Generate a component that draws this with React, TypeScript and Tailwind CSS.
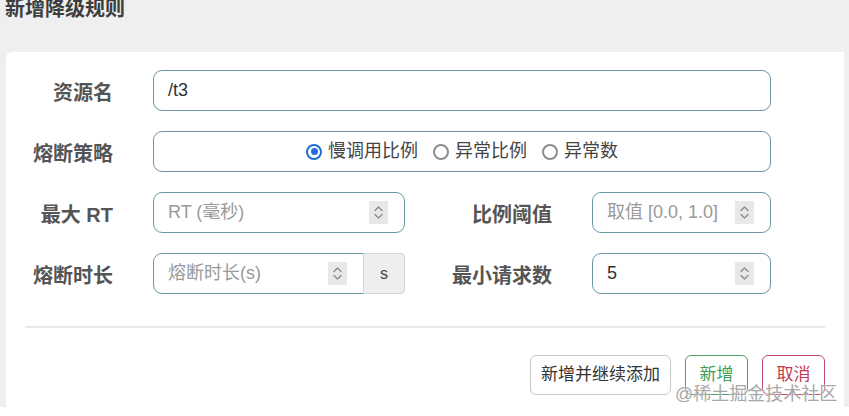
import React from "react"

const font = { fontFamily: '"Liberation Sans", "Noto Sans CJK SC", sans-serif' }

function Spinner() {
  return (
    <span className="flex h-[23px] w-[19px] items-center justify-center bg-[#e8e8e8]">
      <svg width="11" height="17" viewBox="0 0 11 17" fill="none" stroke="#8a8a8a" strokeWidth="1.3" strokeLinecap="round" strokeLinejoin="round">
        <path d="M2 6.5 L5.5 3 L9 6.5" />
        <path d="M2 10.5 L5.5 14 L9 10.5" />
      </svg>
    </span>
  )
}

function Label({ children, w }: { children: React.ReactNode; w: string }) {
  return (
    <div className={`${w} shrink-0 pt-[5px] text-right text-[20px] font-bold text-[#555]`}>{children}</div>
  )
}

function NumInput({ value, placeholder, w, rounded = "rounded-[9px]" }: { value?: string; placeholder?: string; w: string; rounded?: string }) {
  return (
    <div className={`${w} ${rounded} flex h-[41px] items-center justify-between border border-[#6b97a5] pl-[14px] pr-[16px] text-[18px]`}>
      {value ? <span className="text-[#333]">{value}</span> : <span className="text-[#9a9a9a]">{placeholder}</span>}
      <Spinner />
    </div>
  )
}

function Radio({ checked, label }: { checked?: boolean; label: string }) {
  return (
    <label className="flex items-center gap-[6px] text-[18px] text-[#444]">
      {checked ? (
        <span className="flex h-[16px] w-[16px] items-center justify-center rounded-full border-[2px] border-[#1f6fd6]">
          <span className="h-[7px] w-[7px] rounded-full bg-[#1f6fd6]" />
        </span>
      ) : (
        <span className="h-[16px] w-[16px] rounded-full border-[2px] border-[#8d8d8d]" />
      )}
      <span>{label}</span>
    </label>
  )
}

export default function App() {
  return (
    <div className="relative h-[416px] w-[849px] overflow-hidden bg-[#efefef]" style={font}>
      {/* Header */}
      <div className="flex h-[52px] flex-col pl-[5px]">
        <h3 className="-mt-[2px] text-[20px] font-bold leading-[22px] text-[#3d3d3d]">新增降级规则</h3>
      </div>

      {/* Body */}
      <div className="ml-[6px] mr-[5px] flex h-[355px] flex-col rounded-tl-[6px] bg-white pt-[18px]">
        <div className="flex flex-col gap-[20px]">
          <div className="flex items-center">
            <Label w="w-[107px]">资源名</Label>
            <div className="ml-[40px] flex h-[41px] w-[618px] items-center rounded-[9px] border border-[#6b97a5] px-[14px] text-[18px] text-[#333]">
              /t3
            </div>
          </div>

          <div className="flex items-center">
            <Label w="w-[107px]">熔断策略</Label>
            <div className="ml-[40px] flex h-[41px] w-[618px] items-center justify-center gap-[15px] rounded-[9px] border border-[#6b97a5]">
              <Radio checked label="慢调用比例" />
              <Radio label="异常比例" />
              <Radio label="异常数" />
            </div>
          </div>

          <div className="flex items-center">
            <Label w="w-[107px]">最大 RT</Label>
            <div className="ml-[40px]">
              <NumInput w="w-[252px]" placeholder="RT (毫秒)" />
            </div>
            <Label w="w-[147px]">比例阈值</Label>
            <div className="ml-[40px]">
              <NumInput w="w-[179px]" placeholder="取值 [0.0, 1.0]" />
            </div>
          </div>

          <div className="flex items-center">
            <Label w="w-[107px]">熔断时长</Label>
            <div className="ml-[40px] flex">
              <NumInput w="w-[211px]" rounded="rounded-l-[9px]" placeholder="熔断时长(s)" />
              <div className="-ml-px flex h-[41px] w-[42px] items-center justify-center rounded-r-[4px] border border-[#d4d4d4] bg-[#eeeeee] text-[16px] text-[#444]">
                s
              </div>
            </div>
            <Label w="w-[147px]">最小请求数</Label>
            <div className="ml-[40px]">
              <NumInput w="w-[179px]" value="5" />
            </div>
          </div>
        </div>

        <div className="ml-[19px] mr-[19px] mt-[32px] h-[2px] bg-[#e8e8e8]" />

        <div className="mr-[19px] mt-[27px] flex justify-end gap-[14px]">
          <button className="h-[40px] w-[141px] rounded-[6px] border border-[#c8c8c8] text-[17px] text-[#333]">新增并继续添加</button>
          <button className="h-[40px] w-[63px] rounded-[6px] border border-[#4f9e66] text-[17px] text-[#3f9c55]">新增</button>
          <button className="h-[40px] w-[63px] rounded-[6px] border border-[#c24a6a] text-[17px] text-[#c23a52]">取消</button>
        </div>
      </div>

      <div className="h-[9px] bg-white" />

      {/* Watermark */}
      <div className="absolute left-[675px] top-[381px] text-[18px] text-[#a8a8a8]" style={{ textShadow: "0 0 2px #fff" }}>
        @稀土掘金技术社区
      </div>
    </div>
  )
}
